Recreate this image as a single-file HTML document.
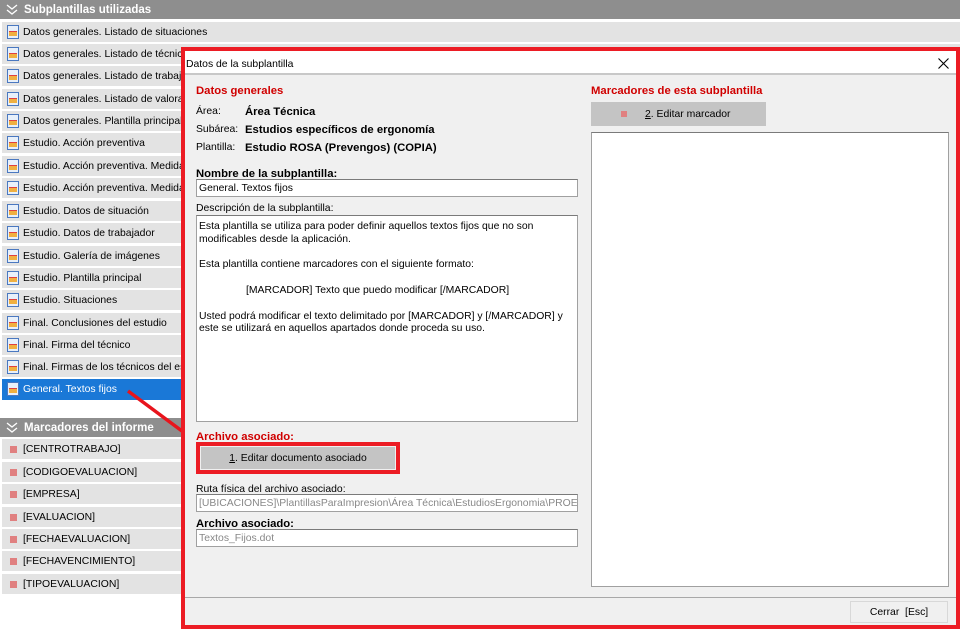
<!DOCTYPE html>
<html><head><meta charset="utf-8"><style>
*{margin:0;padding:0;box-sizing:border-box}
body{width:960px;height:631px;overflow:hidden;background:#fff;font-family:"Liberation Sans",sans-serif;font-size:10.4px;color:#000;position:relative}
.a{position:absolute;white-space:nowrap}
.hdr{position:absolute;left:0;width:960px;height:19px;background:#8e8e8e;color:#fff;font-weight:bold;font-size:11.5px;line-height:20px;padding-left:24px}
.hdr svg{position:absolute;left:6px;top:4px}
.it{position:absolute;left:2px;width:958px;height:20px;background:#e3e3e3;line-height:22px;padding-left:21px}
.ic{position:absolute;left:5px;top:3px;width:12px;height:14px;border:1px solid #4a78c0;background:#e8f0fa}
.ic:after{content:"";position:absolute;left:1px;top:5px;width:8px;height:4px;background:#f0b040;border-top:1px solid #e04040}
.sq{position:absolute;left:8px;top:7px;width:7px;height:7px;background:#e08080}
.sel{background:#1a78d7;color:#fff}
.inp{position:absolute;background:#fff;border:1px solid #a0a0a0;border-top-color:#7a7a7a;padding-left:2px;line-height:18px}
.lb{font-weight:bold;font-size:11.3px}
.red{color:#d00000;font-weight:bold;font-size:11.3px}
</style></head><body>
<div class="hdr" style="top:0"><svg width="12" height="11"><path d="M1 1l5 4 5-4M1 6l5 4 5-4" fill="none" stroke="#fff" stroke-width="1.3"/></svg>Subplantillas utilizadas</div>
<div class="it" style="top:22px"><i class="ic"></i>Datos generales. Listado de situaciones</div>
<div class="it" style="top:44px"><i class="ic"></i>Datos generales. Listado de técnicos</div>
<div class="it" style="top:66px"><i class="ic"></i>Datos generales. Listado de trabajadores</div>
<div class="it" style="top:89px"><i class="ic"></i>Datos generales. Listado de valoraciones</div>
<div class="it" style="top:111px"><i class="ic"></i>Datos generales. Plantilla principal</div>
<div class="it" style="top:133px"><i class="ic"></i>Estudio. Acción preventiva</div>
<div class="it" style="top:156px"><i class="ic"></i>Estudio. Acción preventiva. Medidas</div>
<div class="it" style="top:178px"><i class="ic"></i>Estudio. Acción preventiva. Medidas</div>
<div class="it" style="top:201px"><i class="ic"></i>Estudio. Datos de situación</div>
<div class="it" style="top:223px"><i class="ic"></i>Estudio. Datos de trabajador</div>
<div class="it" style="top:246px"><i class="ic"></i>Estudio. Galería de imágenes</div>
<div class="it" style="top:268px"><i class="ic"></i>Estudio. Plantilla principal</div>
<div class="it" style="top:290px"><i class="ic"></i>Estudio. Situaciones</div>
<div class="it" style="top:313px"><i class="ic"></i>Final. Conclusiones del estudio</div>
<div class="it" style="top:335px"><i class="ic"></i>Final. Firma del técnico</div>
<div class="it" style="top:357px"><i class="ic"></i>Final. Firmas de los técnicos del estudio</div>
<div class="it sel" style="top:379px;height:21px"><i class="ic"></i>General. Textos fijos</div>
<div class="hdr" style="top:418px"><svg width="12" height="11"><path d="M1 1l5 4 5-4M1 6l5 4 5-4" fill="none" stroke="#fff" stroke-width="1.3"/></svg>Marcadores del informe</div>
<div class="it" style="top:439px"><i class="sq"></i>[CENTROTRABAJO]</div>
<div class="it" style="top:462px"><i class="sq"></i>[CODIGOEVALUACION]</div>
<div class="it" style="top:484px"><i class="sq"></i>[EMPRESA]</div>
<div class="it" style="top:507px"><i class="sq"></i>[EVALUACION]</div>
<div class="it" style="top:529px"><i class="sq"></i>[FECHAEVALUACION]</div>
<div class="it" style="top:551px"><i class="sq"></i>[FECHAVENCIMIENTO]</div>
<div class="it" style="top:574px"><i class="sq"></i>[TIPOEVALUACION]</div>
<svg class="a" style="left:0;top:0" width="960" height="631"><line x1="128" y1="391" x2="186" y2="434" stroke="#e8141c" stroke-width="3.5"/></svg>

<div class="a" style="left:181px;top:47px;width:779px;height:582px;border:4px solid #ec1c24;background:#f0f0f0">
 <div class="a" style="left:0;top:0;width:771px;height:24px;background:#fff;border-bottom:2px solid #c8c8c8;line-height:27px;padding-left:1px">Datos de la subplantilla<svg class="a" style="left:753px;top:7px" width="11" height="11"><path d="M0.5 0.5l10 10M10.5 0.5l-10 10" stroke="#000" stroke-width="1.1"/></svg></div>
 <div class="a red" style="left:11px;top:34px">Datos generales</div>
 <div class="a" style="left:11px;top:55px">Área:</div><div class="a lb" style="left:60px;top:55px">Área Técnica</div>
 <div class="a" style="left:11px;top:73px">Subárea:</div><div class="a lb" style="left:60px;top:73px">Estudios específicos de ergonomía</div>
 <div class="a" style="left:11px;top:91px">Plantilla:</div><div class="a lb" style="left:60px;top:91px">Estudio ROSA (Prevengos) (COPIA)</div>
 <div class="a lb" style="left:11px;top:117px">Nombre de la subplantilla:</div>
 <div class="inp" style="left:11px;top:128px;width:382px;height:18px">General. Textos fijos</div>
 <div class="a" style="left:11px;top:152px">Descripción de la subplantilla:</div>
 <div class="inp" style="left:11px;top:164px;width:382px;height:207px;line-height:12.8px;padding-top:5px;white-space:normal">Esta plantilla se utiliza para poder definir aquellos textos fijos que no son modificables desde la aplicación.<br><br>Esta plantilla contiene marcadores con el siguiente formato:<br><br><span style="padding-left:47px">[MARCADOR] Texto que puedo modificar [/MARCADOR]</span><br><br>Usted podrá modificar el texto delimitado por [MARCADOR] y [/MARCADOR] y este se utilizará en aquellos apartados donde proceda su uso.</div>
 <div class="a red" style="left:11px;top:380px">Archivo asociado:</div>
 <div class="a" style="left:11px;top:391px;width:204px;height:32px;border:4px solid #ec1c24;background:#f0f0f0"><div style="position:absolute;left:1px;top:1px;right:1px;bottom:1px;background:#c4c4c4;text-align:center;line-height:24px"><u>1</u>. Editar documento asociado</div></div>
 <div class="a" style="left:11px;top:433px">Ruta física del archivo asociado:</div>
 <div class="inp" style="left:11px;top:443px;width:382px;height:18px;color:#888;overflow:hidden">[UBICACIONES]\PlantillasParaImpresion\Área Técnica\EstudiosErgonomia\PROEVALUACION</div>
 <div class="a lb" style="left:11px;top:467px">Archivo asociado:</div>
 <div class="inp" style="left:11px;top:478px;width:382px;height:18px;color:#888">Textos_Fijos.dot</div>
 <div class="a red" style="left:406px;top:34px">Marcadores de esta subplantilla</div>
 <div class="a" style="left:406px;top:51px;width:175px;height:24px;background:#c4c4c4;line-height:26px;padding-left:54px"><i style="position:absolute;left:30px;top:9px;width:6px;height:6px;background:#e08080"></i><u>2</u>. Editar marcador</div>
 <div class="inp" style="left:406px;top:81px;width:358px;height:455px"></div>
 <div class="a" style="left:0;top:546px;width:771px;height:1px;background:#a8a8a8"></div>
 <div class="a" style="left:665px;top:550px;width:98px;height:22px;background:#f0f0f0;border:1px solid #d8d8d8;text-align:center;line-height:22px">Cerrar &nbsp;[Esc]</div>
</div>
</body></html>
